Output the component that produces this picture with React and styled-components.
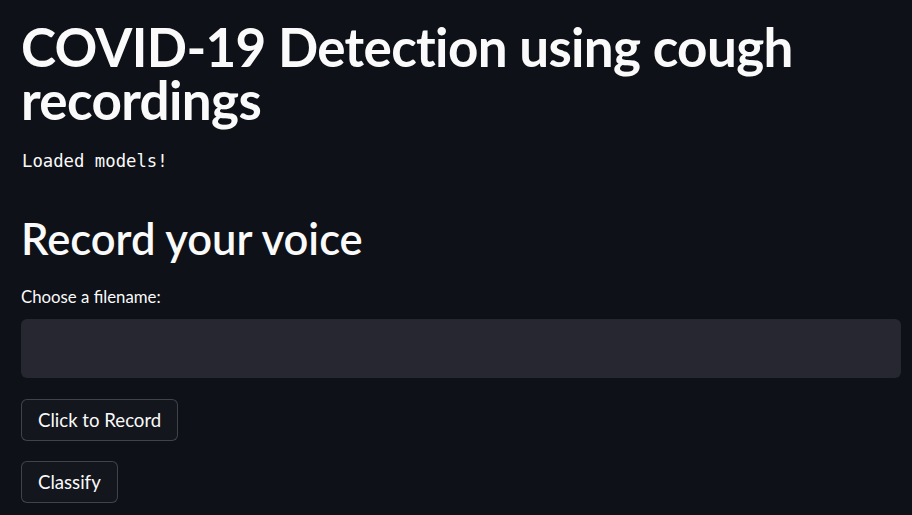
import React from 'react';
import styled, {createGlobalStyle} from 'styled-components';

const Global = createGlobalStyle`
  html, body {
    margin: 0;
    padding: 0;
    background: #0e1117;
  }
  body {
    font-family: Lato, "Noto Sans", sans-serif;
    color: #fafafa;
  }
`;

const Main = styled.main`
  padding: 20px 11px 0 21px;
  display: flex;
  flex-direction: column;
`;

const Title = styled.h1`
  margin: 0;
  font-size: 53px;
  font-weight: 700;
  line-height: 53px;
  letter-spacing: -0.65px;
`;

const Mono = styled.pre`
  margin: 23px 0 0 1px;
  font-family: "DejaVu Sans Mono", "Liberation Mono", monospace;
  font-size: 17.3px;
  line-height: 24px;
`;

const Heading = styled.h2`
  margin: 38px 0 0 0;
  font-size: 43.5px;
  font-weight: 600;
  line-height: 54px;
`;

const Label = styled.label`
  margin-top: 20px;
  font-size: 16.8px;
  line-height: 24px;
`;

const Input = styled.input`
  margin-top: 10px;
  height: 59px;
  box-sizing: border-box;
  border: none;
  border-radius: 6px;
  background: #262730;
  color: #fafafa;
  padding: 0 16px;
  font: inherit;
  font-size: 20px;
  outline: none;
`;

const Button = styled.button`
  align-self: flex-start;
  margin-top: ${p => p.$gap}px;
  height: 42px;
  box-sizing: border-box;
  padding: 0 16px;
  border: 1px solid rgba(250, 250, 250, 0.2);
  border-radius: 6px;
  background: #13161d;
  color: #fafafa;
  font-family: inherit;
  font-size: 18.6px;
  cursor: pointer;
`;

const App = () => {
    return (
        <>
            <Global/>
            <Main>
                <Title>COVID-19 Detection using cough recordings</Title>
                <Mono>Loaded models!</Mono>
                <Heading>Record your voice</Heading>
                <Label>Choose a filename:</Label>
                <Input type="text"/>
                <Button $gap={21}>Click to Record</Button>
                <Button $gap={20}>Classify</Button>
            </Main>
        </>
    );
};

export default App;
